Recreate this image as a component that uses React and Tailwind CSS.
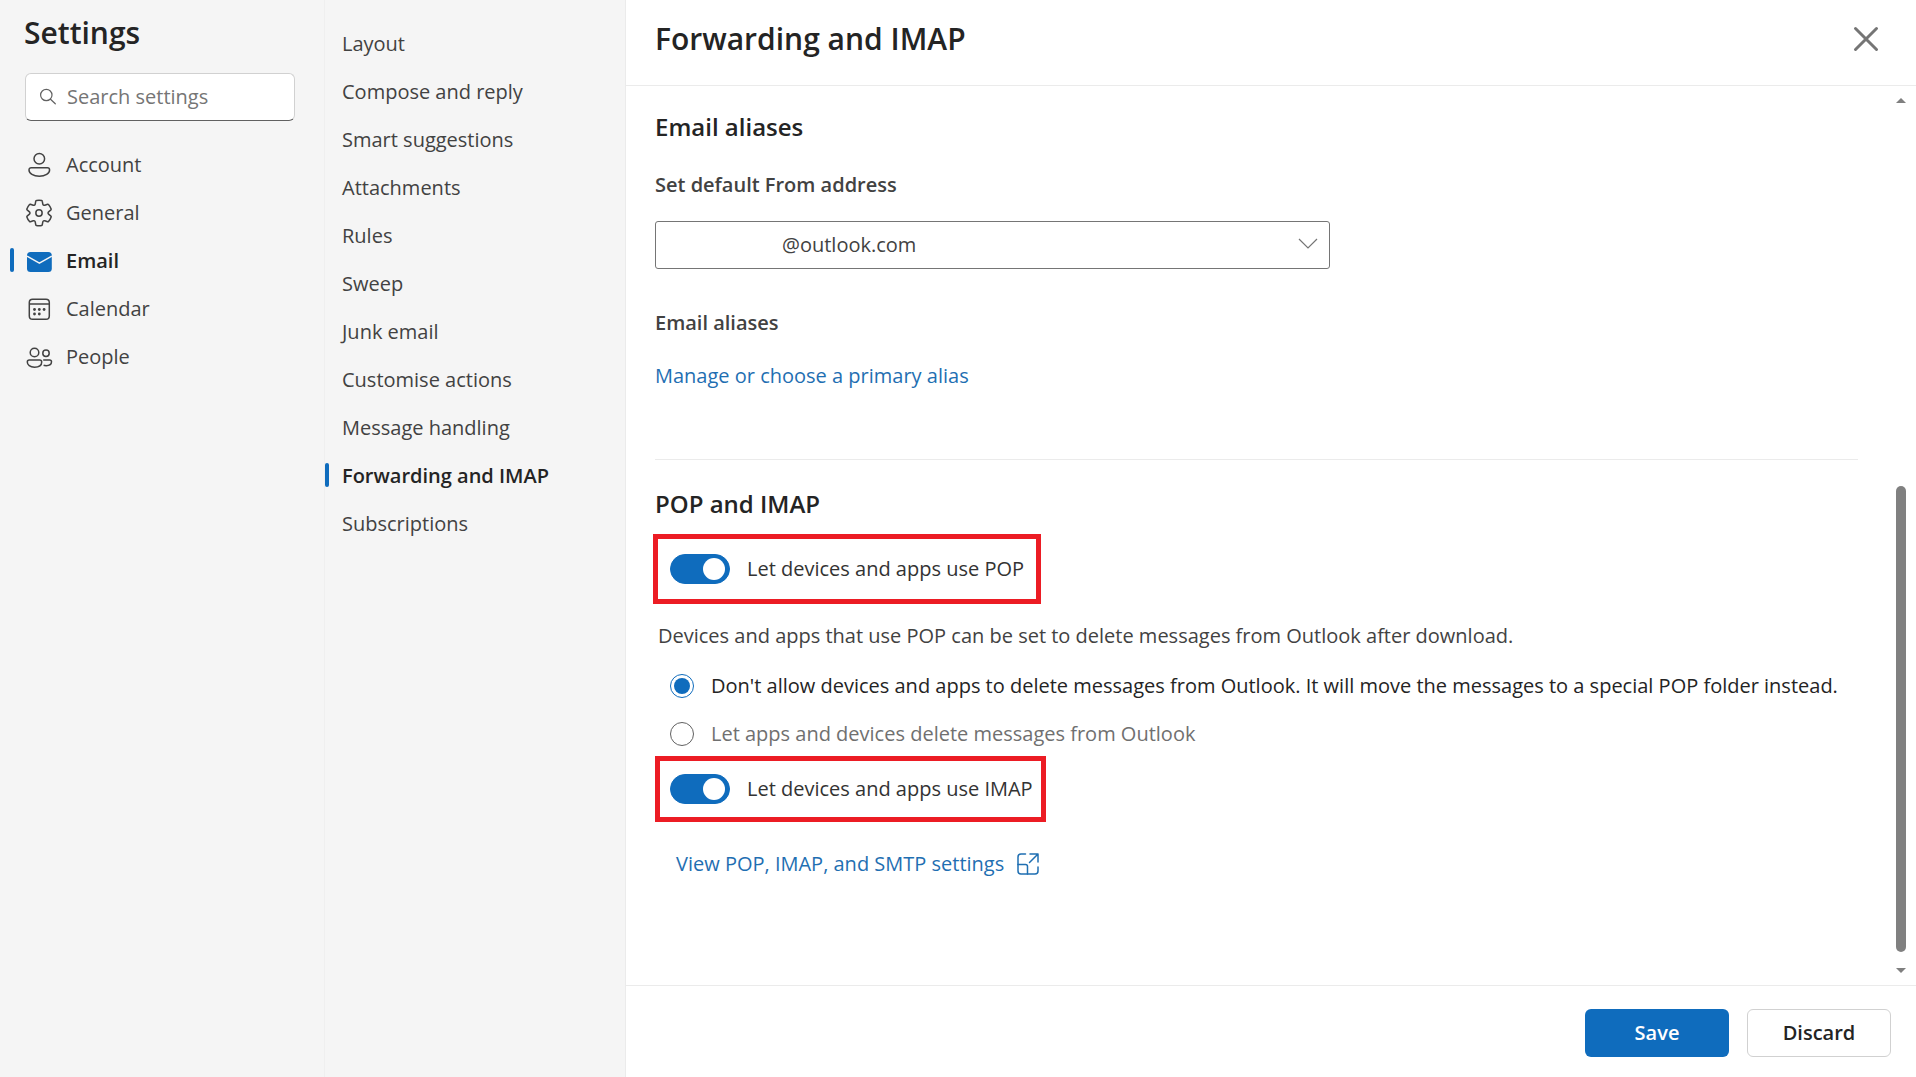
import React, { useState } from "react";

function AccountIcon() {
  return (
    <svg viewBox="0 0 30 30" className="size-[30px]" fill="none" stroke="currentColor" strokeWidth="1.5" aria-hidden="true">
      <circle cx="15.3" cy="8.8" r="5.3" />
      <path d="M7.2 17.7h16.2a2.2 2.2 0 0 1 2.2 2.2c0 3.6-4.4 6.3-10.3 6.3S5 23.500 5 19.900a2.200 2.200 0 0 1 2.200-2.200Z" />
    </svg>
  );
}

function GearIcon() {
  return (
    <svg viewBox="0 0 20 20" className="size-[30px]" fill="none" stroke="currentColor" aria-hidden="true">
      <path d="M1.910 7.380A8.500 8.500 0 0 1 3.700 4.300a.5.5 0 0 1 .54-.13l1.920.68a1 1 0 0 0 1.320-.76l.36-2a.5.5 0 0 1 .4-.4 8.530 8.530 0 0 1 3.550 0c.2.040.35.2.38.4l.37 2a1 1 0 0 0 1.320.76l1.920-.68a.5.5 0 0 1 .54.13 8.500 8.500 0 0 1 1.780 3.080c.06.2 0 .4-.15.54l-1.560 1.320a1 1 0 0 0 0 1.520l1.560 1.320a.5.5 0 0 1 .15.54 8.500 8.500 0 0 1-1.780 3.080.5.5 0 0 1-.54.13l-1.920-.68a1 1 0 0 0-1.320.76l-.37 2a.5.5 0 0 1-.38.4 8.530 8.530 0 0 1-3.560 0 .5.5 0 0 1-.39-.4l-.36-2a1 1 0 0 0-1.320-.76l-1.920.68a.5.5 0 0 1-.54-.13 8.500 8.500 0 0 1-1.780-3.080.5.5 0 0 1 .15-.54l1.560-1.320a1 1 0 0 0 0-1.520L2.060 7.920a.5.5 0 0 1-.15-.54Z" />
      <circle cx="10" cy="10" r="2.100" />
    </svg>
  );
}

function MailIcon() {
  return (
    <svg viewBox="0 0 30 30" className="size-[30px]" aria-hidden="true">
      <rect x="3" y="6" width="24.800" height="20" rx="3.500" fill="#0f6cbd" />
      <path d="M3 10.200l12.400 7 12.400-7" fill="none" stroke="#f5f5f5" strokeWidth="1.500" strokeLinejoin="round" />
    </svg>
  );
}

function CalendarIcon() {
  return (
    <svg viewBox="0 0 30 30" className="size-[30px]" fill="none" stroke="currentColor" strokeWidth="1.500" aria-hidden="true">
      <rect x="5.300" y="5.300" width="20" height="20" rx="3.300" />
      <path d="M5.300 10h20" />
      <g fill="currentColor" stroke="none">
        <circle cx="10.500" cy="15.500" r="1.400" />
        <circle cx="15.300" cy="15.500" r="1.400" />
        <circle cx="20.100" cy="15.500" r="1.400" />
        <circle cx="10.500" cy="20" r="1.400" />
        <circle cx="15.300" cy="20" r="1.400" />
      </g>
    </svg>
  );
}

function PeopleIcon() {
  return (
    <svg viewBox="0 0 30 30" className="size-[30px]" fill="none" stroke="currentColor" strokeWidth="1.500" aria-hidden="true">
      <circle cx="10.500" cy="10.500" r="4.300" />
      <circle cx="22" cy="11.300" r="3.200" />
      <path d="M5.300 18h10.400a2 2 0 0 1 2 2c0 3-2.700 5.200-7.200 5.200S3.300 23 3.300 20a2 2 0 0 1 2-2Z" />
      <path d="M19.200 18h6.500a1.800 1.800 0 0 1 1.800 1.800c0 2.300-2 3.900-5.300 3.900-1 0-1.900-.1-2.600-.4" />
    </svg>
  );
}

function SearchIcon() {
  return (
    <svg viewBox="0 0 20 20" className="size-5 shrink-0" fill="none" stroke="currentColor" strokeWidth="1.200" strokeLinecap="round" aria-hidden="true">
      <circle cx="8.300" cy="8" r="5.700" />
      <path d="M12.500 12.200l4.800 4.600" />
    </svg>
  );
}

function CloseIcon() {
  return (
    <svg viewBox="0 0 28 28" className="size-7" fill="none" stroke="currentColor" strokeWidth="3" strokeLinecap="round" aria-hidden="true">
      <path d="M3.500 3.500l21 21M24.500 3.500l-21 21" />
    </svg>
  );
}

function OpenIcon() {
  return (
    <svg viewBox="0 0 24 24" className="size-6" fill="none" stroke="currentColor" strokeWidth="1.500" strokeLinecap="round" strokeLinejoin="round" aria-hidden="true">
      <path d="M9.500 2H5a3 3 0 0 0-3 3v14a3 3 0 0 0 3 3h14a3 3 0 0 0 3-3v-4" />
      <path d="M2 12.500h7.500a2 2 0 0 1 2 2V22" />
      <path d="M14 2h8v8M22 2l-8.500 8.500" />
    </svg>
  );
}

const sections = [
  { label: "Account", Icon: AccountIcon },
  { label: "General", Icon: GearIcon },
  { label: "Email", Icon: MailIcon },
  { label: "Calendar", Icon: CalendarIcon },
  { label: "People", Icon: PeopleIcon },
];

const emailPages = [
  "Layout",
  "Compose and reply",
  "Smart suggestions",
  "Attachments",
  "Rules",
  "Sweep",
  "Junk email",
  "Customise actions",
  "Message handling",
  "Forwarding and IMAP",
  "Subscriptions",
];

function ActiveBar() {
  return <span className="absolute left-0 top-[11px] h-6 w-1 rounded-sm bg-[#0f6cbd]" />;
}

function Switch({ label, checked, onChange }) {
  return (
    <label className="flex items-center gap-[17px] text-[#333333]">
      <input
        type="checkbox"
        role="switch"
        checked={checked}
        onChange={(e) => onChange(e.target.checked)}
        className="flex h-[30px] w-[60px] shrink-0 appearance-none items-center rounded-full border border-[#616161] bg-white px-1 before:size-[22px] before:rounded-full before:bg-[#616161] checked:justify-end checked:border-[#0f6cbd] checked:bg-[#0f6cbd] checked:before:bg-white"
      />
      {label}
    </label>
  );
}

function Radio({ label, checked, onChange }) {
  return (
    <label className={checked ? "flex h-12 items-center gap-[17px] text-[#242424]" : "flex h-12 items-center gap-[17px] text-[#707070]"}>
      <input
        type="radio"
        name="pop-delete"
        checked={checked}
        onChange={onChange}
        className="grid size-6 shrink-0 appearance-none place-items-center rounded-full border border-[#616161] bg-white checked:border-[#0f6cbd] checked:before:size-4 checked:before:rounded-full checked:before:bg-[#0f6cbd]"
      />
      {label}
    </label>
  );
}

export default function App() {
  const [pop, setPop] = useState(true);
  const [imap, setImap] = useState(true);
  const [keep, setKeep] = useState(true);

  return (
    <div className="flex h-screen bg-white font-['Open_Sans','Noto_Sans',sans-serif] text-[20px] leading-7 text-[#424242]">
      <aside className="flex w-[325px] shrink-0 flex-col border-r border-[#efefef] bg-[#f5f5f5] pt-[13px]">
        <h1 className="pl-6 text-[30px] leading-10 font-semibold text-[#242424]">Settings</h1>
        <label className="mt-5 mr-[29px] ml-[25px] flex h-12 items-center gap-[9px] rounded-md border border-[#d1d1d1] border-b-[#616161] bg-white px-3 text-[#616161]">
          <SearchIcon />
          <input
            type="text"
            aria-label="Search settings"
            placeholder="Search settings"
            className="min-w-0 flex-1 bg-transparent outline-none placeholder:text-[#757575]"
          />
        </label>
        <nav className="mt-5 pl-[10px]" aria-label="Settings sections">
          {sections.map(({ label, Icon }) => (
            <button
              key={label}
              type="button"
              className={
                label === "Email"
                  ? "relative flex h-12 w-full items-center gap-3 pl-[14px] text-left font-semibold text-[#242424]"
                  : "relative flex h-12 w-full items-center gap-3 pl-[14px] text-left"
              }
            >
              {label === "Email" && <ActiveBar />}
              <Icon />
              {label}
            </button>
          ))}
        </nav>
      </aside>

      <nav className="w-[301px] shrink-0 border-r border-[#ebebeb] bg-[#f5f5f5] pt-5" aria-label="Email settings">
        {emailPages.map((label) => (
          <button
            key={label}
            type="button"
            className={
              label === "Forwarding and IMAP"
                ? "relative block h-12 w-full pl-[17px] text-left font-semibold text-[#242424]"
                : "relative block h-12 w-full pl-[17px] text-left"
            }
          >
            {label === "Forwarding and IMAP" && <ActiveBar />}
            {label}
          </button>
        ))}
      </nav>

      <main className="flex min-w-0 flex-1 flex-col">
        <header className="flex h-[86px] shrink-0 items-center justify-between border-b border-[#ebebeb] pr-9 pb-2 pl-[29px]">
          <h2 className="text-[30px] leading-10 font-semibold text-[#242424]">Forwarding and IMAP</h2>
          <button type="button" aria-label="Close" className="text-[#757575]">
            <CloseIcon />
          </button>
        </header>

        <div className="flex min-h-0 flex-1">
          <div className="min-w-0 flex-1 overflow-hidden pl-[29px]">
            <section className="border-b border-[#ebebeb] pt-[25px]">
              <h3 className="text-[24px] leading-8 font-semibold text-[#242424]">Email aliases</h3>
              <label htmlFor="from-address" className="mt-7 block font-semibold">
                Set default From address
              </label>
              <div className="relative mt-[22px] w-[675px] max-w-full">
                <select
                  id="from-address"
                  className="h-12 w-full appearance-none rounded-[3px] border border-[#757575] bg-white pl-[126px] text-[#424242]"
                >
                  <option>@outlook.com</option>
                </select>
                <svg viewBox="0 0 20 12" className="pointer-events-none absolute top-[17px] right-3 h-3 w-5" fill="none" stroke="#757575" strokeWidth="1.200" aria-hidden="true">
                  <path d="M1 1l9 9 9-9" />
                </svg>
              </div>
              <h4 className="mt-10 font-semibold">Email aliases</h4>
              <a href="#alias" className="mt-[25px] mb-[69px] block text-[#1f6fb2]">
                Manage or choose a primary alias
              </a>
            </section>

            <section className="pt-7">
              <h3 className="text-[24px] leading-8 font-semibold text-[#242424]">POP and IMAP</h3>
              <div className="mt-[14px] -ml-0.5 flex h-[70px] w-fit items-center border-[5px] border-[#ec1c24] pr-3 pl-3">
                <Switch label="Let devices and apps use POP" checked={pop} onChange={setPop} />
              </div>
              <p className="mt-[18px] pl-[3px]">
                Devices and apps that use POP can be set to delete messages from Outlook after download.
              </p>
              <div className="mt-3 -mb-0.5 pl-[15px]">
                <Radio
                  label="Don't allow devices and apps to delete messages from Outlook. It will move the messages to a special POP folder instead."
                  checked={keep}
                  onChange={() => setKeep(true)}
                />
                <Radio
                  label="Let apps and devices delete messages from Outlook"
                  checked={!keep}
                  onChange={() => setKeep(false)}
                />
              </div>
              <div className="flex h-[66px] w-fit items-center border-[5px] border-[#ec1c24] pr-2 pl-[10px]">
                <Switch label="Let devices and apps use IMAP" checked={imap} onChange={setImap} />
              </div>
              <a href="#servers" className="mt-7 flex w-fit items-center gap-3 pl-[21px] text-[#1f6fb2]">
                View POP, IMAP, and SMTP settings
                <OpenIcon />
              </a>
            </section>
          </div>

          <div className="flex w-[58px] shrink-0 flex-col items-end pt-3 pr-[10px] pb-3" aria-hidden="true">
            <svg viewBox="0 0 10 5" className="h-[5px] w-[10px]" fill="#7f7f7f">
              <path d="M5 0l5 5H0Z" />
            </svg>
            <div className="flex min-h-0 w-[10px] flex-1 flex-col justify-end py-4">
              <div className="h-[56%] rounded-full bg-[#808080]" />
            </div>
            <svg viewBox="0 0 10 5" className="h-[5px] w-[10px]" fill="#7f7f7f">
              <path d="M0 0h10L5 5Z" />
            </svg>
          </div>
        </div>

        <footer className="flex h-[92px] shrink-0 justify-end gap-[18px] border-t border-[#ebebeb] pt-[23px] pr-[25px]">
          <button type="button" className="h-12 w-36 rounded-md bg-[#0f6cbd] font-semibold text-white">
            Save
          </button>
          <button type="button" className="h-12 w-36 rounded-md border border-[#d1d1d1] bg-white font-semibold text-[#242424]">
            Discard
          </button>
        </footer>
      </main>
    </div>
  );
}
